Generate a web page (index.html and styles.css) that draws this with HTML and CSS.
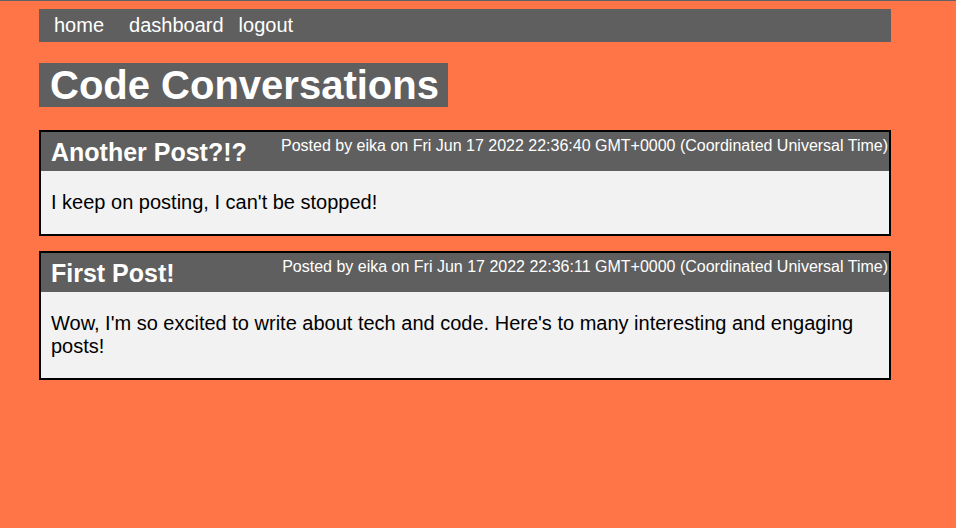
FILE: index.html
```html
<!DOCTYPE html>
<html lang="en">
<head>
<meta charset="utf-8">
<title>Code Conversations</title>
<link rel="stylesheet" href="styles.css">
</head>
<body>
<div class="page">
  <nav class="nav">
    <a class="nav-link nav-home" href="#">home</a>
    <a class="nav-link" href="#">dashboard</a>
    <a class="nav-link" href="#">logout</a>
  </nav>
  <header class="title-row">
    <h1 class="site-title">Code Conversations</h1>
  </header>
  <main class="posts">
    <article class="post">
      <div class="post-head">
        <h2 class="post-title">Another Post?!?</h2>
        <span class="post-meta">Posted by eika on Fri Jun 17 2022 22:36:40 GMT+0000 (Coordinated Universal Time)</span>
      </div>
      <div class="post-body">
        <p>I keep on posting, I can't be stopped!</p>
      </div>
    </article>
    <article class="post">
      <div class="post-head">
        <h2 class="post-title">First Post!</h2>
        <span class="post-meta">Posted by eika on Fri Jun 17 2022 22:36:11 GMT+0000 (Coordinated Universal Time)</span>
      </div>
      <div class="post-body">
        <p>Wow, I'm so excited to write about tech and code. Here's to many interesting and engaging posts!</p>
      </div>
    </article>
  </main>
</div>
</body>
</html>
```
FILE: styles.css
```css
html {
  background: #ff7547;
  border-top: 1px solid #5f6368;
}
body {
  margin: 8px 65px 8px 39px;
  font-family: "Liberation Sans", Arial, sans-serif;
  color: #000;
}
.nav {
  display: flex;
  align-items: center;
  gap: 15px;
  background: #5f5f5f;
  height: 33px;
  padding: 0 15px;
}
.nav-link {
  color: #fff;
  text-decoration: none;
  font-size: 20px;
}
.nav-home {
  margin-right: 10px;
}
.title-row {
  display: flex;
  margin-top: 21px;
}
.site-title {
  margin: 0;
  background: #5f5f5f;
  color: #fff;
  font-size: 40px;
  line-height: 44px;
  padding: 0 9px 0 11px;
}
.posts {
  display: flex;
  flex-direction: column;
  gap: 15px;
  margin-top: 23px;
}
.post {
  border: 2px solid #000;
  background: #f2f2f2;
}
.post-head {
  display: flex;
  justify-content: space-between;
  align-items: flex-start;
  background: #5f5f5f;
  color: #fff;
  padding: 5px 1px 5px 10px;
}
.post-title {
  margin: 1px 0 0;
  font-size: 25px;
  line-height: 28px;
}
.post-meta {
  font-size: 16px;
  line-height: 18px;
}
.post-body {
  padding: 20px 10px;
  font-size: 20px;
  line-height: 23px;
}
.post-body p {
  margin: 0;
}
```
